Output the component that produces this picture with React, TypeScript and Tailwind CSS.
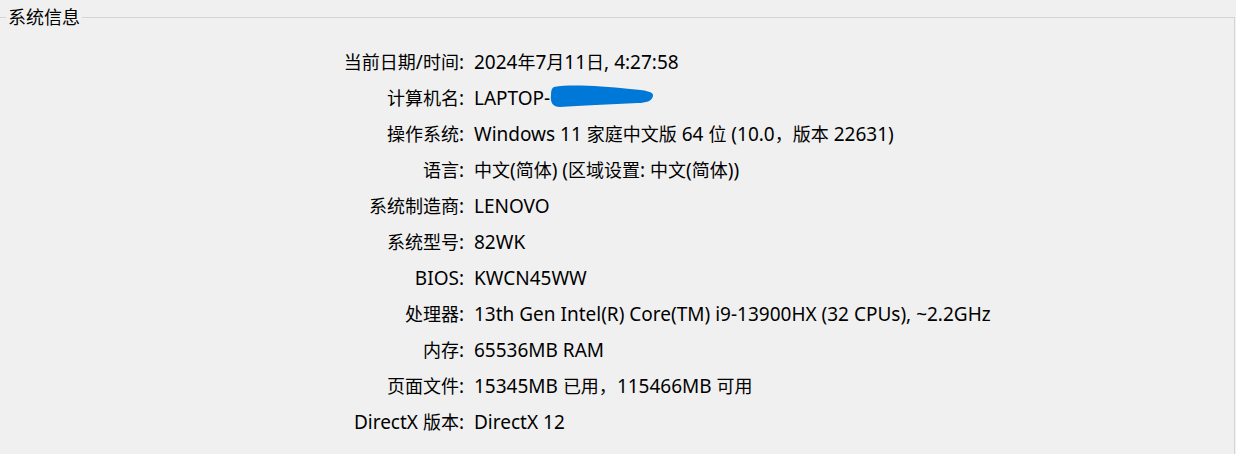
const rows: [string, string][] = [
  ['当前日期/时间:', '2024年7月11日, 4:27:58'],
  ['计算机名:', 'LAPTOP-'],
  ['操作系统:', 'Windows 11 家庭中文版 64 位 (10.0，版本 22631)'],
  ['语言:', '中文(简体) (区域设置: 中文(简体))'],
  ['系统制造商:', 'LENOVO'],
  ['系统型号:', '82WK'],
  ['BIOS:', 'KWCN45WW'],
  ['处理器:', '13th Gen Intel(R) Core(TM) i9-13900HX (32 CPUs), ~2.2GHz'],
  ['内存:', '65536MB RAM'],
  ['页面文件:', '15345MB 已用，115466MB 可用'],
  ['DirectX 版本:', 'DirectX 12'],
];

// latin runs sit a touch larger than the CJK ones, like the Windows UI font
function Mixed({ text }: { text: string }) {
  const parts = text.split(/([\u3000-\u9fff\uff00-\uffef]+)/).filter(Boolean);
  return (
    <span className="leading-[24px]">
      {parts.map((p, i) =>
        /[\u3000-\u9fff\uff00-\uffef]/.test(p) ? (
          <span key={i} className="text-[18px]">{p}</span>
        ) : (
          <span key={i} className="text-[19px]">{p}</span>
        )
      )}
    </span>
  );
}

// blue brush stroke hiding the machine name
function Scribble() {
  return (
    <svg width="104" height="25" viewBox="0 0 104 25" className="relative -top-[3px]">
      <path
        d="M4 4 C 20 1, 50 3, 80 6 C 96 7, 104 9, 103 13 C 102 18, 96 20, 88 20 C 60 21, 30 23, 10 24 C 3 24, 0 20, 1 12 C 1 7, 2 5, 4 4 Z"
        fill="#0078d7"
      />
    </svg>
  );
}

export default function App() {
  return (
    <div
      className="h-[454px] w-[1236px] overflow-hidden bg-[#f0f0f0] text-black"
      style={{ fontFamily: '"Noto Sans", "Noto Sans CJK SC", sans-serif' }}
    >
      <fieldset className="mt-[5px] mr-[1px] h-[460px] border-0 border-t border-r border-[#d5d5d5]">
        <legend className="ml-[6px] px-[2px] text-[18px] leading-[24px]">系统信息</legend>

        <div className="mt-[15px] grid grid-cols-[464px_1fr] gap-x-[10px]">
          {rows.map(([label, value]) => (
            <div key={label} className="contents">
              <div className="flex h-[36px] items-center justify-end whitespace-nowrap">
                <Mixed text={label} />
              </div>
              <div className="flex h-[36px] items-center whitespace-nowrap">
                <Mixed text={value} />
                {label === '计算机名:' && <Scribble />}
              </div>
            </div>
          ))}
        </div>
      </fieldset>
    </div>
  );
}
